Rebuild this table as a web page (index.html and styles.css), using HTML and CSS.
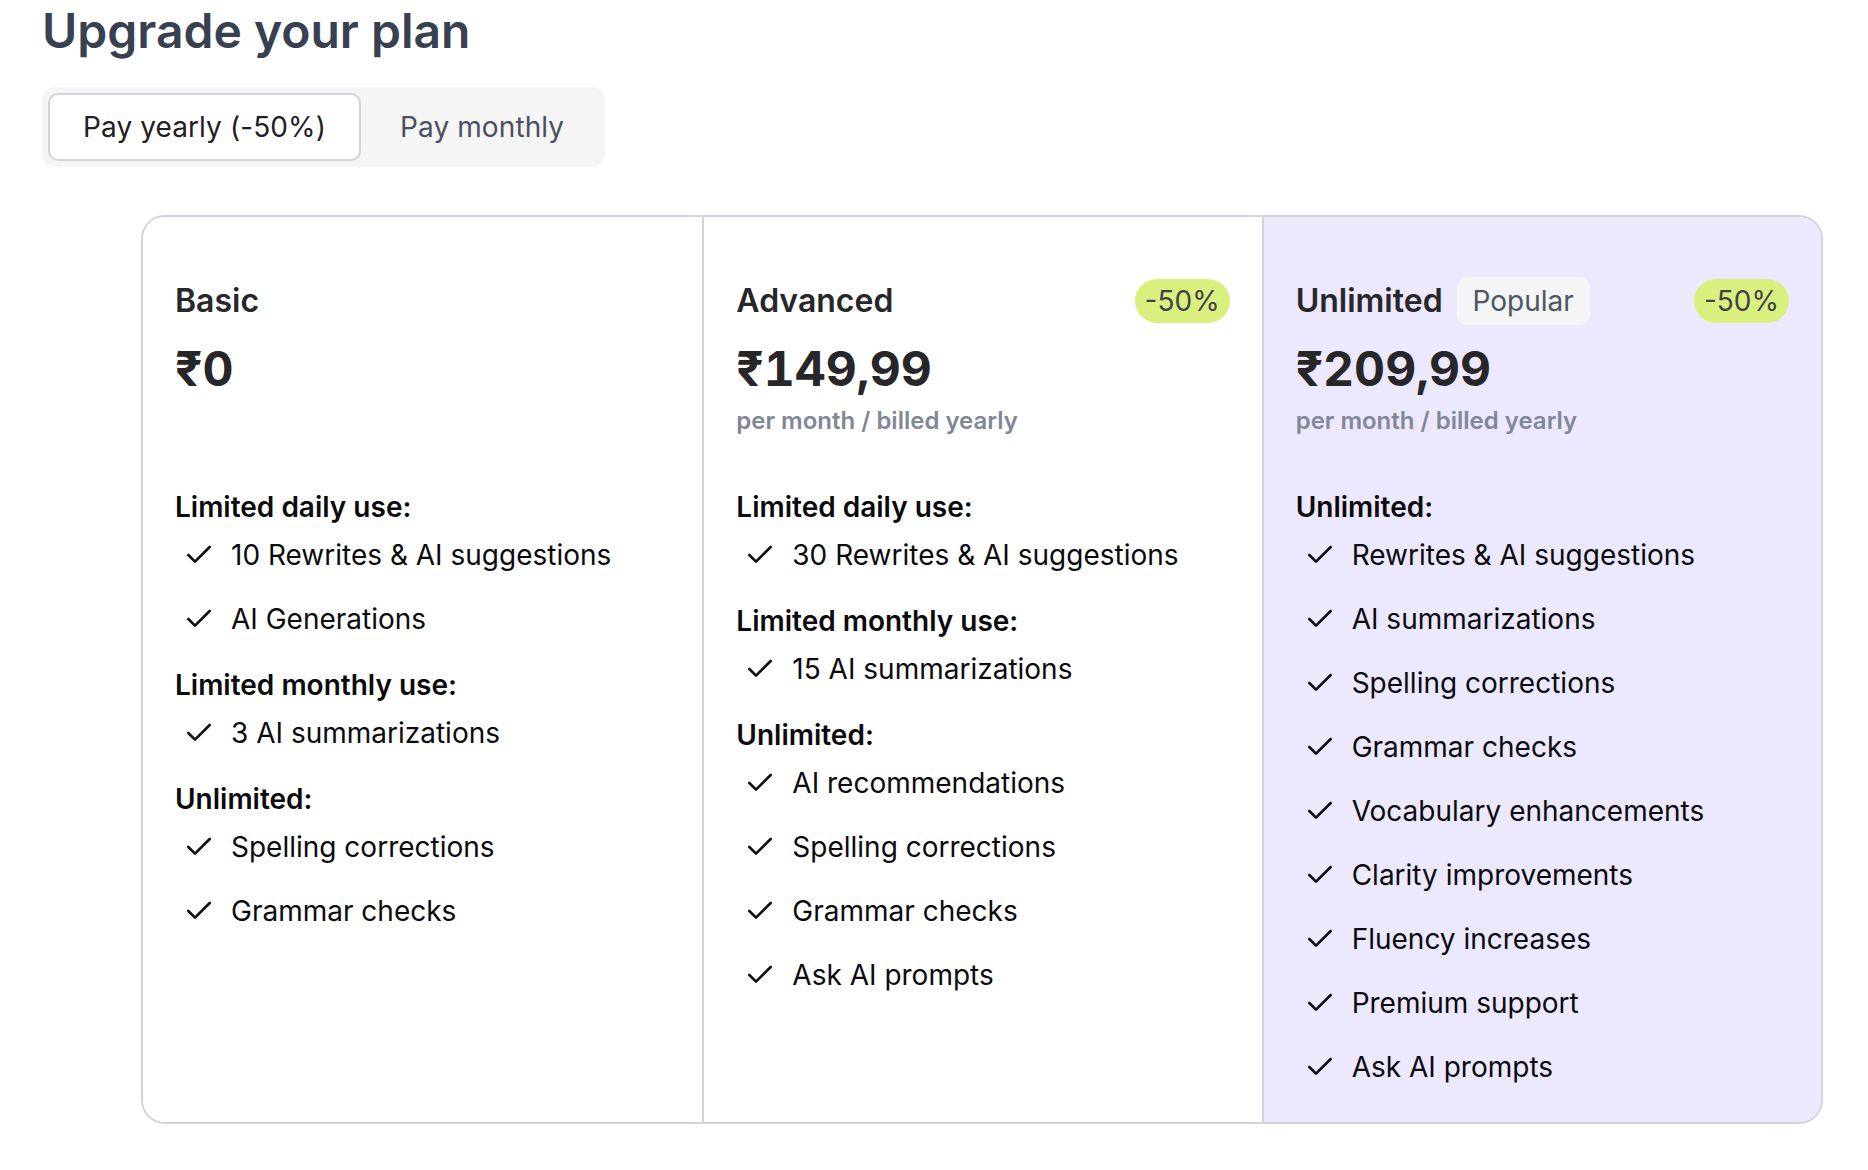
FILE: index.html
```html
<!DOCTYPE html>
<html lang="en">
<head>
<meta charset="utf-8">
<title>Upgrade your plan</title>
<link rel="stylesheet" href="styles.css">
</head>
<body>
<main class="page">
  <h1 class="page-title">Upgrade your plan</h1>
  <div class="toggle">
    <button class="toggle-btn is-active">Pay yearly (-50%)</button>
    <button class="toggle-btn">Pay monthly</button>
  </div>

  <section class="plans">
    <div class="plan">
      <div class="plan-head">
        <div class="plan-name-wrap"><span class="plan-name">Basic</span></div>
      </div>
      <div class="pricing">
        <div class="price">₹0</div>
      </div>
      <div class="features">
        <div class="group">
          <div class="group-title">Limited daily use:</div>
          <ul class="list">
            <li><svg class="check" viewBox="0 0 24 24"><path d="M20 6 9 17l-5-5"/></svg><span>10 Rewrites &amp; AI suggestions</span></li>
            <li><svg class="check" viewBox="0 0 24 24"><path d="M20 6 9 17l-5-5"/></svg><span>AI Generations</span></li>
          </ul>
        </div>
        <div class="group">
          <div class="group-title">Limited monthly use:</div>
          <ul class="list">
            <li><svg class="check" viewBox="0 0 24 24"><path d="M20 6 9 17l-5-5"/></svg><span>3 AI summarizations</span></li>
          </ul>
        </div>
        <div class="group">
          <div class="group-title">Unlimited:</div>
          <ul class="list">
            <li><svg class="check" viewBox="0 0 24 24"><path d="M20 6 9 17l-5-5"/></svg><span>Spelling corrections</span></li>
            <li><svg class="check" viewBox="0 0 24 24"><path d="M20 6 9 17l-5-5"/></svg><span>Grammar checks</span></li>
          </ul>
        </div>
      </div>
    </div>

    <div class="plan">
      <div class="plan-head">
        <div class="plan-name-wrap"><span class="plan-name">Advanced</span></div>
        <span class="discount">-50%</span>
      </div>
      <div class="pricing">
        <div class="price">₹149,99</div>
        <div class="per">per month / billed yearly</div>
      </div>
      <div class="features">
        <div class="group">
          <div class="group-title">Limited daily use:</div>
          <ul class="list">
            <li><svg class="check" viewBox="0 0 24 24"><path d="M20 6 9 17l-5-5"/></svg><span>30 Rewrites &amp; AI suggestions</span></li>
          </ul>
        </div>
        <div class="group">
          <div class="group-title">Limited monthly use:</div>
          <ul class="list">
            <li><svg class="check" viewBox="0 0 24 24"><path d="M20 6 9 17l-5-5"/></svg><span>15 AI summarizations</span></li>
          </ul>
        </div>
        <div class="group">
          <div class="group-title">Unlimited:</div>
          <ul class="list">
            <li><svg class="check" viewBox="0 0 24 24"><path d="M20 6 9 17l-5-5"/></svg><span>AI recommendations</span></li>
            <li><svg class="check" viewBox="0 0 24 24"><path d="M20 6 9 17l-5-5"/></svg><span>Spelling corrections</span></li>
            <li><svg class="check" viewBox="0 0 24 24"><path d="M20 6 9 17l-5-5"/></svg><span>Grammar checks</span></li>
            <li><svg class="check" viewBox="0 0 24 24"><path d="M20 6 9 17l-5-5"/></svg><span>Ask AI prompts</span></li>
          </ul>
        </div>
      </div>
    </div>

    <div class="plan plan-featured">
      <div class="plan-head">
        <div class="plan-name-wrap"><span class="plan-name">Unlimited</span><span class="tag">Popular</span></div>
        <span class="discount">-50%</span>
      </div>
      <div class="pricing">
        <div class="price">₹209,99</div>
        <div class="per">per month / billed yearly</div>
      </div>
      <div class="features">
        <div class="group">
          <div class="group-title">Unlimited:</div>
          <ul class="list">
            <li><svg class="check" viewBox="0 0 24 24"><path d="M20 6 9 17l-5-5"/></svg><span>Rewrites &amp; AI suggestions</span></li>
            <li><svg class="check" viewBox="0 0 24 24"><path d="M20 6 9 17l-5-5"/></svg><span>AI summarizations</span></li>
            <li><svg class="check" viewBox="0 0 24 24"><path d="M20 6 9 17l-5-5"/></svg><span>Spelling corrections</span></li>
            <li><svg class="check" viewBox="0 0 24 24"><path d="M20 6 9 17l-5-5"/></svg><span>Grammar checks</span></li>
            <li><svg class="check" viewBox="0 0 24 24"><path d="M20 6 9 17l-5-5"/></svg><span>Vocabulary enhancements</span></li>
            <li><svg class="check" viewBox="0 0 24 24"><path d="M20 6 9 17l-5-5"/></svg><span>Clarity improvements</span></li>
            <li><svg class="check" viewBox="0 0 24 24"><path d="M20 6 9 17l-5-5"/></svg><span>Fluency increases</span></li>
            <li><svg class="check" viewBox="0 0 24 24"><path d="M20 6 9 17l-5-5"/></svg><span>Premium support</span></li>
            <li><svg class="check" viewBox="0 0 24 24"><path d="M20 6 9 17l-5-5"/></svg><span>Ask AI prompts</span></li>
          </ul>
        </div>
      </div>
    </div>
  </section>
</main>
</body>
</html>
```

FILE: styles.css
```css
* {
  box-sizing: border-box;
}

html, body {
  margin: 0;
  padding: 0;
  background: #ffffff;
}

body {
  font-family: "Inter", "Noto Sans", "DejaVu Sans", sans-serif;
  color: #111113;
}

.page {
  padding: 3px 45px 0 42px;
}

.page-title {
  margin: 0;
  font-size: 48px;
  line-height: 56px;
  font-weight: 600;
  color: #374151;
}

.toggle {
  margin-top: 28px;
  display: inline-flex;
  gap: 4px;
  padding: 6px;
  background: #f5f5f5;
  border-radius: 12px;
}

.toggle-btn {
  font-family: inherit;
  font-size: 28px;
  line-height: 32px;
  font-weight: 400;
  letter-spacing: 0.1px;
  padding: 16px 33px;
  border: 2px solid transparent;
  border-radius: 10px;
  background: transparent;
  color: #4b5060;
  cursor: pointer;
}

.toggle-btn.is-active {
  background: #ffffff;
  border-color: #d1d5db;
  color: #1f2024;
}

.plans {
  margin-top: 48px;
  margin-left: 99px;
  display: grid;
  grid-template-columns: 1fr 1fr 1fr;
  border: 2px solid #d1d5db;
  border-radius: 24px;
  overflow: hidden;
}

.plan {
  padding: 60px 32px 23px;
  background: #ffffff;
}

.plan + .plan {
  border-left: 2px solid #d1d5db;
}

.plan-featured {
  background: #ece8fd;
}

.plan-head {
  height: 48px;
  display: flex;
  align-items: center;
  justify-content: space-between;
}

.plan-name-wrap {
  display: flex;
  align-items: center;
  gap: 14px;
}

.plan-name {
  font-size: 32px;
  line-height: 40px;
  font-weight: 600;
  color: #27272a;
}

.tag {
  font-size: 28px;
  line-height: 32px;
  font-weight: 400;
  color: #4b5563;
  background: #f4f5f5;
  border-radius: 10px;
  padding: 8px 16px;
}

.discount {
  font-size: 28px;
  line-height: 44px;
  height: 44px;
  padding: 0 10px;
  border-radius: 22px;
  background: #d9f07e;
  color: #3f434b;
}

.pricing {
  margin-top: 16px;
  min-height: 96px;
}

.price {
  font-size: 48px;
  line-height: 56px;
  font-weight: 700;
  color: #27272a;
  font-variant-numeric: tabular-nums;
}

.per {
  margin-top: 8px;
  font-size: 24px;
  line-height: 32px;
  font-weight: 600;
  color: #808796;
}

.features {
  margin-top: 54px;
}

.group + .group {
  margin-top: 18px;
}

.group-title {
  font-size: 28px;
  line-height: 32px;
  font-weight: 600;
  color: #0b0b0d;
}

.list {
  list-style: none;
  margin: 0;
  padding: 0;
}

.list li {
  height: 64px;
  display: flex;
  align-items: center;
  gap: 16px;
  padding-left: 8px;
  font-size: 28px;
  line-height: 32px;
  color: #0b0b0d;
}

.check {
  width: 32px;
  height: 32px;
  flex: 0 0 32px;
  fill: none;
  stroke: #111113;
  stroke-width: 2;
  stroke-linecap: round;
  stroke-linejoin: round;
}
```
